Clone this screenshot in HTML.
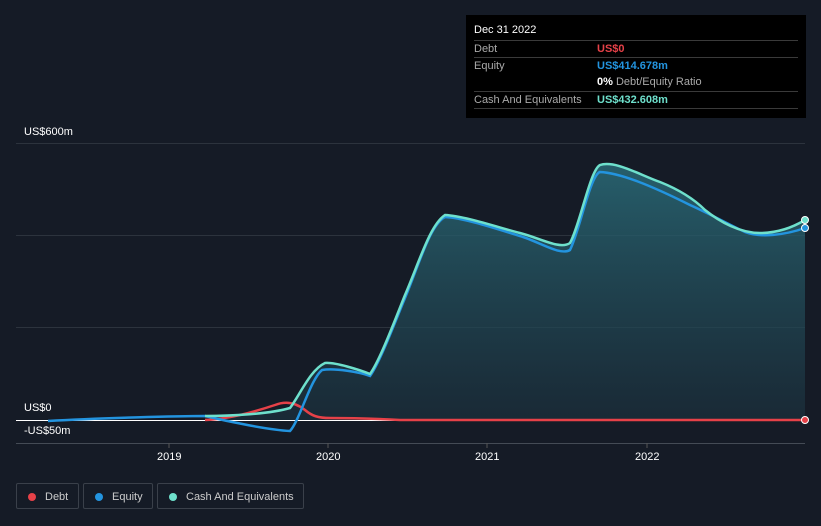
<!DOCTYPE html><html><head><style>
body{margin:0;width:821px;height:526px;background:#151b26;font-family:"Liberation Sans",sans-serif;overflow:hidden;position:relative}
.tt{position:absolute;left:466px;top:15px;width:340px;height:103px;background:#000;color:#fff;font-size:11px}
.row{position:absolute;left:8px;width:324px;border-top:1px solid #3a3a3a;height:17px;line-height:17px;color:#aaa}
.row span{position:absolute;left:123px;font-weight:bold}
.lab{position:absolute;color:#fff;font-size:11px}
.leg{position:absolute;top:483px;height:26px;border:1px solid #3a404a;border-radius:2px;color:#ccc;font-size:11px;line-height:26px;box-sizing:border-box}
.leg i{position:absolute;left:11px;top:9px;width:8px;height:8px;border-radius:50%}
</style></head><body>
<svg width="821" height="526" style="position:absolute;left:0;top:0">
<defs><linearGradient id="g" x1="0" y1="0" x2="0" y2="1"><stop offset="0" stop-color="#2a6b78" stop-opacity=".85"/><stop offset="1" stop-color="#1c3340" stop-opacity=".6"/></linearGradient></defs>
<g stroke="#2c333d" stroke-width="1"><line x1="16" y1="143.5" x2="805" y2="143.5"/><line x1="16" y1="235.5" x2="805" y2="235.5"/><line x1="16" y1="327.5" x2="805" y2="327.5"/><line x1="16" y1="443.5" x2="805" y2="443.5" stroke="#444b55"/>
<line x1="169" y1="443" x2="169" y2="448" stroke="#555"/><line x1="328" y1="443" x2="328" y2="448" stroke="#555"/><line x1="487" y1="443" x2="487" y2="448" stroke="#555"/><line x1="647" y1="443" x2="647" y2="448" stroke="#555"/></g>
<path d="M205,416 C230,416 270,414 290,408 C300,395 310,370 325,363 C335,362 360,370 370,374 C380,360 395,320 405,295 C420,260 430,225 445,215 C465,216 500,228 520,233 C540,238 560,250 570,243 C580,225 590,170 600,165 C615,160 640,175 660,182 C680,190 695,200 705,210 C720,222 740,233 760,233 C780,233 795,226 805,220 L805,420 L205,420Z" fill="url(#g)"/>
<line x1="16" y1="420.5" x2="805" y2="420.5" stroke="#fff" stroke-width="1"/>
<path d="M205,420 C230,419 260,410 275,405 C285,401 295,402 305,410 C312,416 318,418 330,418 C360,418 380,419 400,420 L805,420" fill="none" stroke="#e64148" stroke-width="2.5"/>
<path d="M48,421 C100,418 180,416 205,416 C230,422 270,430 290,431 C300,420 310,380 322,370 C335,368 360,372 370,376 C380,362 395,322 405,298 C420,262 430,225 445,217 C465,218 500,230 520,236 C540,242 560,256 570,250 C580,230 590,175 600,172 C620,173 650,185 690,205 C710,214 730,225 745,232 C760,238 785,235 805,228" fill="none" stroke="#2394df" stroke-width="2.5"/>
<path d="M205,416 C230,416 270,414 290,408 C300,395 310,370 325,363 C335,362 360,370 370,374 C380,360 395,320 405,295 C420,260 430,225 445,215 C465,216 500,228 520,233 C540,238 560,250 570,243 C580,225 590,170 600,165 C615,160 640,175 660,182 C680,190 695,200 705,210 C720,222 740,233 760,233 C780,233 795,226 805,220" fill="none" stroke="#6ee0cc" stroke-width="2.5"/>
<circle cx="805" cy="420" r="3.5" fill="#e64148" stroke="#fff"/><circle cx="805" cy="228" r="3.5" fill="#2394df" stroke="#fff"/><circle cx="805" cy="220" r="3.5" fill="#6ee0cc" stroke="#fff"/>
</svg>
<div class="lab" style="left:24px;top:126px">US$600m</div>
<div class="lab" style="left:24px;top:402px">US$0</div>
<div class="lab" style="left:24px;top:425px">-US$50m</div>
<div class="lab" style="left:157px;top:451px">2019</div>
<div class="lab" style="left:316px;top:451px">2020</div>
<div class="lab" style="left:475px;top:451px">2021</div>
<div class="lab" style="left:635px;top:451px">2022</div>
<div class="tt">
<div style="position:absolute;left:8px;top:9px">Dec 31 2022</div>
<div class="row" style="top:25px">Debt<span style="color:#e64148">US$0</span></div>
<div class="row" style="top:42px">Equity<span style="color:#2394df">US$414.678m</span></div>
<div class="row" style="top:59px;border-top:none"><span style="color:#fff">0% <b style="color:#aaa;font-weight:normal">Debt/Equity Ratio</b></span></div>
<div class="row" style="top:76px">Cash And Equivalents<span style="color:#6ee0cc">US$432.608m</span></div>
<div class="row" style="top:93px;height:0"></div>
</div>
<div class="leg" style="left:16px;width:63px"><i style="background:#e64148"></i><span style="position:absolute;left:28px">Debt</span></div>
<div class="leg" style="left:83px;width:70px"><i style="background:#2394df"></i><span style="position:absolute;left:28px">Equity</span></div>
<div class="leg" style="left:157px;width:147px"><i style="background:#6ee0cc"></i><span style="position:absolute;left:28px">Cash And Equivalents</span></div>
</body></html>
